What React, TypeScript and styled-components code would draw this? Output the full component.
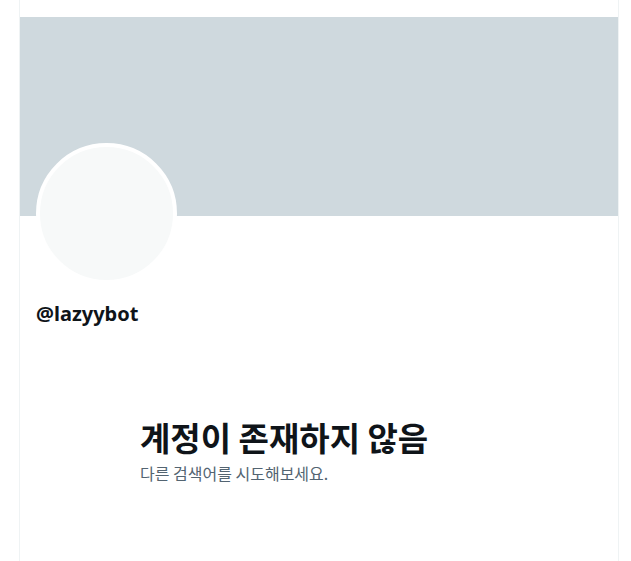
import React from "react";
import styled, { createGlobalStyle } from "styled-components";

const Global = createGlobalStyle`
  html, body { margin: 0; padding: 0; background: #ffffff; }
  body { font-family: "Noto Sans", "Noto Sans CJK KR", sans-serif; }
  #root { min-height: 561px; }
`;

const Page = styled.div`
  display: flex;
  justify-content: flex-start;
  padding-left: 19px;
  min-height: 561px;
`;

const Column = styled.main`
  width: 600px;
  box-sizing: border-box;
  border-left: 1px solid #eff3f4;
  border-right: 1px solid #eff3f4;
  min-height: 561px;
  padding-top: 17px;
  display: flex;
  flex-direction: column;
`;

const Banner = styled.div`
  height: 199px;
  background: #cfd9de;
`;

const ProfileHeader = styled.div`
  padding: 0 16px;
  display: flex;
  flex-direction: column;
`;

const Avatar = styled.div`
  width: 133px;
  height: 133px;
  margin-top: -73px;
  border-radius: 50%;
  border: 4px solid #ffffff;
  background: #f7f9f9;
`;

const Handle = styled.div`
  margin-top: 18px;
  font-family: "Noto Sans", "Noto Sans CJK KR", sans-serif;
  font-weight: 700;
  font-size: 20px;
  line-height: 24px;
  color: #0f1419;
`;

const Empty = styled.section`
  width: 358px;
  align-self: center;
  margin-top: 91px;
  display: flex;
  flex-direction: column;
`;

const Title = styled.h2`
  margin: 0;
  font-family: "Noto Sans CJK KR", sans-serif;
  font-weight: 700;
  font-size: 33px;
  line-height: 40px;
  color: #0f1419;
`;

const Subtitle = styled.p`
  margin: 6px 0 0;
  font-family: "Noto Sans CJK KR", sans-serif;
  font-weight: 400;
  font-size: 16px;
  line-height: 20px;
  color: #536471;
`;

export default function App() {
  return (
    <>
      <Global />
      <Page>
        <Column>
          <Banner />
          <ProfileHeader>
            <Avatar />
            <Handle>@lazyybot</Handle>
          </ProfileHeader>
          <Empty>
            <Title>계정이 존재하지 않음</Title>
            <Subtitle>다른 검색어를 시도해보세요.</Subtitle>
          </Empty>
        </Column>
      </Page>
    </>
  );
}
